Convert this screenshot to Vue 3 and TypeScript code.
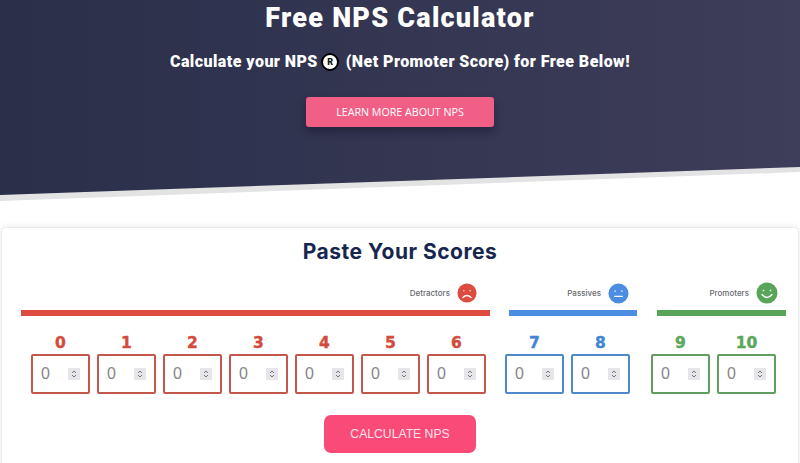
<script setup lang="ts">
interface Group { key: string; label: string; mood: string; scores: number[] }
const groups: Group[] = [
  { key: 'red', label: 'Detractors', mood: 'M-4.5 5 Q0 0.5 4.5 5', scores: [0, 1, 2, 3, 4, 5, 6] },
  { key: 'blue', label: 'Passives', mood: 'M-4 3 H4', scores: [7, 8] },
  { key: 'green', label: 'Promoters', mood: 'M-5 1.5 Q0 7.5 5 1.5', scores: [9, 10] },
]
</script>

<template>
  <div class="page">
    <header class="band">
      <div class="hero">
        <h1>Free NPS Calculator</h1>
        <h2>Calculate your NPS <span class="reg">R</span> (Net Promoter Score) for Free Below!</h2>
        <a class="learn">LEARN MORE ABOUT NPS</a>
      </div>
    </header>

    <section class="card">
      <h3>Paste Your Scores</h3>
      <div class="heads">
        <div v-for="g in groups" :key="g.key" class="head" :class="g.key">
          <div class="legend">
            <span class="label">{{ g.label }}</span>
            <svg class="face" viewBox="-11 -11 22 22">
              <circle class="disc" r="10.5" />
              <circle cx="-3.5" cy="-2.5" r="0.9" fill="#fff" opacity=".8" />
              <circle cx="3.5" cy="-2.5" r="0.9" fill="#fff" opacity=".8" />
              <path :d="g.mood" fill="none" stroke="#fff" stroke-width="1.4" stroke-linecap="round" />
            </svg>
          </div>
          <div class="bar"></div>
        </div>
      </div>
      <div class="scores">
        <div v-for="g in groups" :key="g.key" class="set" :class="g.key">
          <div v-for="s in g.scores" :key="s" class="cell">
            <div class="num">{{ s }}</div>
            <div class="box">
              <span class="val">0</span>
              <span class="spin">
                <svg viewBox="0 0 12 12" width="12" height="12">
                  <path d="M4 5 L6 3 L8 5 M4 7 L6 9 L8 7" fill="none" stroke="#777" stroke-width="1" />
                </svg>
              </span>
            </div>
          </div>
        </div>
      </div>
      <div class="action"><a class="calc">CALCULATE NPS</a></div>
    </section>
  </div>
</template>

<style>
html, body { margin: 0; background: #fff; }
</style>

<style scoped>
.page { width: 800px; height: 463px; overflow: hidden; position: relative; font-family: "Liberation Sans", sans-serif; }
.band { background: #e3e3e3; height: 201px; clip-path: polygon(0 0, 100% 0, 100% 172px, 0 201px); }
.hero {
  height: 195px; box-sizing: border-box; text-align: center; color: #fff;
  background: linear-gradient(90deg, #2a2f4a, #3e3d5a);
  clip-path: polygon(0 0, 100% 0, 100% 167px, 0 195px);
  display: flex; flex-direction: column; align-items: center;
}
h1 { margin: 0; padding-top: 2px; font: 900 27px/32px Roboto, sans-serif; letter-spacing: 1.25px; }
h2 { margin: 16px 0 0; font: 900 16px/24px Roboto, sans-serif; letter-spacing: .45px; display: flex; align-items: center; white-space: pre; }
.reg {
  width: 18px; height: 18px; border-radius: 50%; background: #fff; color: #111; border: 2px solid #000; box-sizing: border-box;
  font: 900 9px/14px Roboto, sans-serif; letter-spacing: 0; margin: 0 2px 0 -1px; text-align: center;
}
.learn {
  margin-top: 23px; width: 188px; height: 30px; border-radius: 3px; background: #f15f87;
  font: 500 10.7px/30px "Open Sans", sans-serif; color: #fff;
  box-shadow: 0 5px 8px rgba(15, 15, 30, .4);
}
.card {
  margin: 27px 2px 0; height: 260px; background: #fff; border-radius: 4px;
  box-shadow: 0 -2px 6px rgba(0, 0, 0, .07), -1px 0 2px rgba(0, 0, 0, .07), 1px 0 2px rgba(0, 0, 0, .07);
}
h3 { margin: 0; padding-top: 10px; text-align: center; font: 700 21px/28px Inter, sans-serif; letter-spacing: .5px; color: #17264f; }
.heads { display: flex; padding-left: 19px; margin-top: 11px; }
.head { display: flex; flex-direction: column; }
.head.red { width: 469px; margin-right: 19px; --c: #dd4b41; --p: 13px; --s: 20px; }
.head.blue { width: 128px; margin-right: 20px; --c: #4b8de0; --p: 8px; --s: 21px; }
.head.green { width: 129px; --c: #58a55a; --p: 8px; --s: 22px; }
.legend { height: 32px; display: flex; justify-content: flex-end; align-items: center; padding-right: var(--p); gap: 7px; }
.label { font: 500 8px/10px Inter, sans-serif; color: #66696e; }
.face { width: var(--s); height: var(--s); }
.disc { fill: var(--c); }
.bar { height: 6px; background: var(--c); margin-top: 1px; }
.scores { display: flex; padding-left: 29px; margin-top: 17px; }
.set { display: flex; gap: 7px; }
.set.red { --c: #c4574b; --n: #d34b3c; margin-right: 19px; }
.set.blue { --c: #4d89c8; --n: #4286d6; margin-right: 21px; }
.set.green { --c: #5f9e5f; --n: #5aa65a; }
.cell { width: 59px; }
.num { text-align: center; height: 21px; font: 700 15.5px/20px "DejaVu Sans", sans-serif; -webkit-text-stroke: .4px var(--n); color: var(--n); }
.box {
  height: 40px; box-sizing: border-box; border: 2px solid var(--c); border-radius: 2px;
  display: flex; align-items: center; justify-content: space-between; padding: 0 8px 0 8px;
}
.val { font: 16px/20px "Liberation Sans", sans-serif; color: #868686; }
.spin { width: 12px; height: 12px; background: #e6e6ea; display: block; }
.spin svg { display: block; }
.action { display: flex; justify-content: center; margin-top: 21px; }
.calc {
  width: 152px; height: 38px; border-radius: 7px; background: #f94a78; color: #fde2ea; text-align: center;
  font: 12.2px/38px "Liberation Sans", sans-serif;
}
</style>
